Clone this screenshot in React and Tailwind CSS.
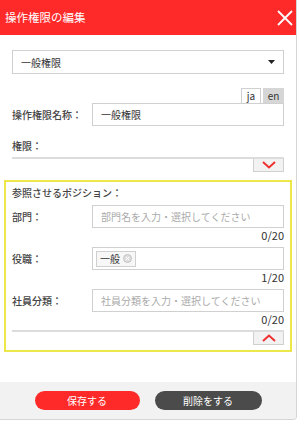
import React from 'react';

const font = { fontFamily: '"Noto Sans CJK JP", "Noto Sans", sans-serif' };

function Chevron({ up }) {
  return (
    <svg width="14" height="8" viewBox="0 0 14 8">
      <polyline
        points={up ? '1,7 7,1.5 13,7' : '1,1 7,6.5 13,1'}
        fill="none"
        stroke="#f03030"
        strokeWidth="2"
      />
    </svg>
  );
}

function Toggle({ up }) {
  return (
    <div>
      <div className="h-[2px] bg-[#dcdcdc]" />
      <div className="flex justify-end">
        <div className="w-[31px] h-[13px] bg-[#f2f2f2] border border-t-0 border-[#d0d0d0] flex items-center justify-center">
          <Chevron up={up} />
        </div>
      </div>
    </div>
  );
}

function Row({ label, children, count }) {
  return (
    <div>
      <div className="flex items-center">
        <div className="w-[80px] text-[10px] text-[#444] font-medium">{label}</div>
        <div className="flex-1 h-[23px] border border-[#d0d0d0] flex items-center px-[3px]">{children}</div>
      </div>
      {count && <div className="text-right text-[11px] text-[#333] leading-[13px] mt-[1px]">{count}</div>}
    </div>
  );
}

export default function App() {
  return (
    <div className="w-[300px] h-[421px] bg-white" style={font}>
      <div className="w-[297px] h-[420px] border-r border-b border-[#d6d6d6] rounded-br-[4px] flex flex-col overflow-hidden">
        {/* ヘッダー */}
        <div className="h-[35px] bg-[#fe2a2a] flex items-center justify-between pl-[5px] pr-[2px] shrink-0">
          <span className="text-white text-[11.5px]">操作権限の編集</span>
          <svg width="18" height="18" viewBox="0 0 18 18">
            <line x1="2" y1="2" x2="16" y2="16" stroke="white" strokeWidth="1.8" />
            <line x1="16" y1="2" x2="2" y2="16" stroke="white" strokeWidth="1.8" />
          </svg>
        </div>

        {/* 本体 */}
        <div className="flex-1 px-[12px] pt-[15px]">
          <div className="h-[24px] border border-[#d0d0d0] flex items-center justify-between pl-[8px] pr-[8px] text-[10px] text-[#333]">
            <span>一般権限</span>
            <svg width="7" height="4" viewBox="0 0 7 4"><polygon points="0,0 7,0 3.5,4" fill="#222" /></svg>
          </div>

          <div className="flex justify-end mt-[14px]">
            <div className="w-[20px] h-[15px] border border-b-0 border-[#d0d0d0] text-[10px] leading-[14px] text-center text-[#333]">ja</div>
            <div className="w-[21px] h-[15px] ml-[2px] bg-[#d6d6d6] text-[10px] leading-[15px] text-center text-[#333]">en</div>
          </div>

          <div className="flex items-center">
            <div className="w-[80px] text-[10px] text-[#444] font-medium">操作権限名称：</div>
            <div className="flex-1 h-[23px] border border-[#d0d0d0] flex items-center pl-[8px] text-[10px] text-[#333]">一般権限</div>
          </div>

          <div className="text-[10px] text-[#444] font-medium mt-[13px] leading-[14px]">権限：</div>
          <div className="mt-[4px]">
            <Toggle />
          </div>

          {/* 参照させるポジション */}
          <div className="mx-[-8px] mt-[8px] border-2 border-[#ece84c] px-[6px] pt-[4px] pb-[5px]">
            <div className="text-[10px] text-[#444] font-medium leading-[14px] mb-[5px]">参照させるポジション：</div>
            <div className="flex flex-col gap-[5px]">
              <Row label="部門：" count="0/20">
                <span className="text-[10px] text-[#aaa] pl-[5px]">部門名を入力・選択してください</span>
              </Row>
              <Row label="役職：" count="1/20">
                <span className="h-[16px] border border-[#d0d0d0] bg-[#f7f7f7] flex items-center gap-[3px] px-[3px] text-[10px] text-[#333]">
                  一般
                  <svg width="9" height="9" viewBox="0 0 9 9">
                    <circle cx="4.5" cy="4.5" r="4" fill="#ddd" stroke="#c4c4c4" />
                    <line x1="2.8" y1="2.8" x2="6.2" y2="6.2" stroke="#fff" strokeWidth="1" />
                    <line x1="6.2" y1="2.8" x2="2.8" y2="6.2" stroke="#fff" strokeWidth="1" />
                  </svg>
                </span>
              </Row>
              <Row label="社員分類：" count="0/20">
                <span className="text-[10px] text-[#aaa] pl-[5px]">社員分類を入力・選択してください</span>
              </Row>
            </div>
            <div className="mt-[4px]">
              <Toggle up />
            </div>
          </div>
        </div>

        {/* フッター */}
        <div className="h-[37px] bg-[#f2f2f2] flex items-center justify-center gap-[15px] shrink-0">
          <button className="w-[105px] h-[19px] rounded-full bg-[#fe2a2a] text-white text-[10px]">保存する</button>
          <button className="w-[107px] h-[19px] rounded-full bg-[#4b4b4b] text-white text-[10px]">削除をする</button>
        </div>
      </div>
    </div>
  );
}
